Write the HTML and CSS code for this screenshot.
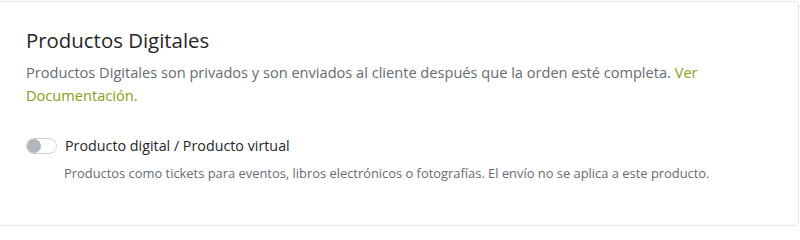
FILE: index.html
```html
<!DOCTYPE html>
<html lang="es">
<head>
<meta charset="utf-8">
<link rel="stylesheet" href="styles.css">
</head>
<body>
<section class="card">
  <h2 class="title">Productos Digitales</h2>
  <p class="intro">Productos Digitales son privados y son enviados al cliente después que la orden esté completa. <a class="link" href="#">Ver Documentación.</a></p>
  <div class="option">
    <label class="toggle-row">
      <span class="toggle"><span class="knob"></span></span>
      <span class="option-label">Producto digital / Producto virtual</span>
    </label>
    <p class="option-help">Productos como tickets para eventos, libros electrónicos o fotografías. El envío no se aplica a este producto.</p>
  </div>
</section>
</body>
</html>
```
FILE: styles.css
```css
html, body {
  margin: 0;
  padding: 0;
  background: #ffffff;
}
body {
  padding-top: 1px;
  font-family: "Open Sans", Lato, Arial, sans-serif;
}
.card {
  box-sizing: border-box;
  margin: 0 1px 0 -4px;
  height: 225px;
  border: 1px solid #e6e7e9;
  border-radius: 4px;
  background: #fff;
  padding: 25px 20px 0 29px;
}
.title {
  margin: 0;
  font-size: 20.4px;
  line-height: 26px;
  font-weight: 400;
  color: #262626;
}
.intro {
  margin: 8px 0 0;
  font-size: 14.6px;
  line-height: 23px;
  color: #676b73;
}
.link {
  color: #83a018;
  text-decoration: none;
}
.option {
  margin-top: 29px;
}
.toggle-row {
  display: flex;
  align-items: center;
  gap: 8px;
}
.toggle {
  box-sizing: border-box;
  width: 31px;
  height: 16px;
  border: 1px solid #cdd0d4;
  border-radius: 8px;
  background: #fff;
  display: flex;
  align-items: center;
}
.knob {
  width: 14px;
  height: 14px;
  border-radius: 50%;
  background: #b3b7bd;
}
.option-label {
  font-size: 14.3px;
  line-height: 20px;
  color: #262626;
}
.option-help {
  margin: 7px 0 0 38px;
  font-size: 12.9px;
  line-height: 20px;
  color: #676b73;
}
```
